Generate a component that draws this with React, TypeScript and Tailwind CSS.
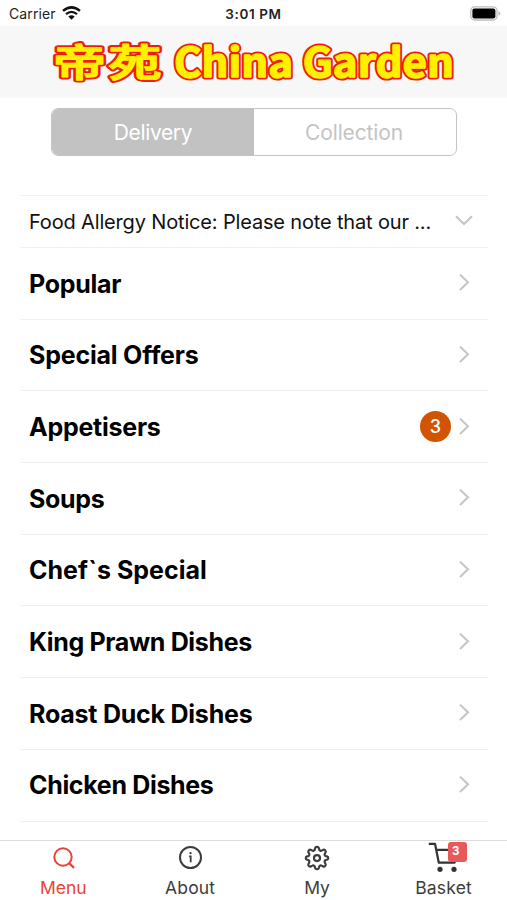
import type { ReactNode } from 'react';
import clsx from 'clsx';

type Category = {
  name: string;
  tracking: string;
  count?: number;
};

const CATEGORIES: Category[] = [
  { name: 'Popular', tracking: 'tracking-[-0.3px]' },
  { name: 'Special Offers', tracking: 'tracking-[-0.2px]' },
  { name: 'Appetisers', tracking: 'tracking-[-0.25px]', count: 3 },
  { name: 'Soups', tracking: 'tracking-[-0.3px]' },
  { name: 'Chef`s Special', tracking: 'tracking-[0px]' },
  { name: 'King Prawn Dishes', tracking: 'tracking-[-0.35px]' },
  { name: 'Roast Duck Dishes', tracking: 'tracking-[-0.23px]' },
  { name: 'Chicken Dishes', tracking: 'tracking-[-0.33px]' },
];

function StatusBar() {
  return (
    <header className="grid h-[26px] grid-cols-3 items-center pt-[2px] text-[14px] leading-none">
      <div className="flex items-center gap-[6px] pl-[9px] text-[#222]">
        <span className="tracking-[0.1px]">Carrier</span>
        <svg className="-mt-[2px]" width="19" height="14" viewBox="0 0 19 14" fill="none" aria-hidden>
          <path d="M1 4.9Q9.5 -2.1 18 4.9" stroke="#111" strokeWidth="2.5" />
          <path d="M4 8.1Q9.5 3.6 15 8.1" stroke="#111" strokeWidth="2.3" />
          <path d="M6.3 10.6Q9.5 7.8 12.7 10.6L9.5 13.8Z" fill="#111" />
        </svg>
      </div>
      <div className="pt-px text-center text-[13.5px] font-semibold tracking-[0.6px] text-[#222]">3:01 PM</div>
      <div className="flex justify-end pr-[6px]">
        <svg className="-mt-[2px]" width="31" height="15" viewBox="0 0 31 15" aria-hidden>
          <rect x="0.8" y="0.8" width="26.2" height="13.2" rx="3.8" fill="#fff" stroke="#bdbdbd" strokeWidth="1.3" />
          <rect x="2.4" y="2.4" width="23" height="10" rx="2" fill="#000" />
          <path d="M28.4 5.2Q30.4 5.7 30.4 7.4T28.4 9.6Z" fill="#bdbdbd" />
        </svg>
      </div>
    </header>
  );
}

function LogoText() {
  return (
    <>
      <text transform="translate(53 49.5) scale(1.4 1)" fontSize="38" fontWeight="500" letterSpacing="1.5">
        帝苑
      </text>
      <text x="174" y="51" fontSize="40" fontWeight="700" textLength="280" lengthAdjust="spacingAndGlyphs">
        China Garden
      </text>
    </>
  );
}

function Logo() {
  return (
    <div className="flex h-[72px] items-center justify-center bg-[#f7f7f7]">
      <svg
        width="507"
        height="72"
        viewBox="0 0 507 72"
        role="img"
        aria-label="帝苑 China Garden"
        fontFamily="'Noto Sans CJK SC', sans-serif"
        strokeLinejoin="round"
      >
        {/* red outline under a slightly fattened yellow face */}
        <g fill="#f01d0c" stroke="#f01d0c" strokeWidth="5.2">
          <LogoText />
        </g>
        <g fill="#fff000" stroke="#fff000" strokeWidth="1.4" aria-hidden>
          <LogoText />
        </g>
      </svg>
    </div>
  );
}

function Chevron({ down = false }: { down?: boolean }) {
  return (
    <svg
      className="shrink-0"
      width="18"
      height="18"
      viewBox="0 0 18 18"
      fill="none"
      stroke="#c4c4c4"
      strokeWidth="2"
      aria-hidden
    >
      <path d={down ? 'M1 3.2L9 11L17 3.2' : 'M5 0.6L13 8.3L5 16'} />
    </svg>
  );
}

function CategoryRow({ name, tracking, count }: Category) {
  return (
    <li className="flex h-[71.7px] items-center border-b border-[#f0f0f0] pr-[15px] pl-[9px]">
      <span className={clsx('flex-1 pt-[2px] text-[25px] font-bold whitespace-nowrap text-black', tracking)}>
        {name}
      </span>
      {count !== undefined && (
        <span className="mr-[4px] flex size-[31px] items-center justify-center rounded-full bg-[#d35400] text-[18px] font-medium text-white">
          {count}
        </span>
      )}
      <Chevron />
    </li>
  );
}

type TabProps = {
  label: string;
  tracking: string;
  active?: boolean;
  children: ReactNode;
};

function Tab({ label, tracking, active = false, children }: TabProps) {
  return (
    <button
      type="button"
      className={clsx('flex flex-col items-center', active ? 'text-[#ea4335]' : 'text-[#3c3c3c]')}
    >
      <span className="flex h-[34px] items-center">{children}</span>
      <span className={clsx('mt-px text-[17.5px] leading-[24px]', tracking)}>{label}</span>
    </button>
  );
}

export default function App() {
  return (
    <div className="flex h-[900px] w-[507px] flex-col overflow-hidden bg-white font-['Inter','Noto_Sans_CJK_SC',sans-serif]">
      <StatusBar />
      <Logo />

      <main className="flex min-h-0 flex-1 flex-col px-5">
        <div className="mt-[10px] ml-[31px] flex h-[48px] w-[406px] overflow-hidden rounded-[7px] border-[1.5px] border-[#c4c4c4] text-[21px]">
          <button type="button" className="w-[202px] bg-[#c2c2c2] pt-px tracking-[-0.35px] text-white">
            Delivery
          </button>
          <button type="button" className="flex-1 pt-px pr-[2px] tracking-[-0.15px] text-[#c4c4c4]">
            Collection
          </button>
        </div>

        <div className="mt-[39px] mr-[-1px] flex h-[53px] shrink-0 items-center border-y border-[#f0f0f0] pr-[15px] pl-[9px]">
          <p className="flex-1 text-[20px] tracking-[-0.16px] whitespace-nowrap text-[#111]">
            Food Allergy Notice: Please note that our ...
          </p>
          <Chevron down />
        </div>

        <ul className="mr-[-1px]">
          {CATEGORIES.map((category) => (
            <CategoryRow key={category.name} {...category} />
          ))}
        </ul>
      </main>

      <nav className="grid h-[60px] shrink-0 grid-cols-4 border-t border-[#dcdcdc] bg-white">
        <Tab label="Menu" tracking="tracking-normal" active>
          <svg className="ml-[2px]" width="22" height="22" viewBox="0 0 22 22" fill="none" stroke="currentColor" strokeWidth="2" aria-hidden>
            <circle cx="10" cy="10" r="8.7" />
            <path d="M16 16L21 20.8" strokeWidth="2.4" />
          </svg>
        </Tab>
        <Tab label="About" tracking="tracking-[0.2px]">
          <svg width="24" height="24" viewBox="0 0 24 24" fill="none" stroke="currentColor" strokeWidth="2" aria-hidden>
            <circle cx="12.5" cy="11.5" r="10.5" />
            <path d="M11.1 10.4H12.7V16.3" strokeWidth="1.8" />
            <circle cx="12.5" cy="7.1" r="1.2" fill="currentColor" stroke="none" />
          </svg>
        </Tab>
        <Tab label="My" tracking="tracking-[-0.3px]">
          <svg
            className="-mt-px"
            width="26"
            height="26"
            viewBox="0 0 24 24"
            fill="none"
            stroke="currentColor"
            strokeWidth="2"
            strokeLinejoin="round"
            aria-hidden
          >
            <path d="M10.2 3.1a1.85 1.85 0 0 1 3.6 0l.3 1.2a1.5 1.5 0 0 0 2.2.9l1.1-.6a1.75 1.75 0 0 1 2.4 2.4l-.6 1.1a1.5 1.5 0 0 0 .9 2.2l1.1.2a1.6 1.6 0 0 1 0 3.1l-1.1.3a1.5 1.5 0 0 0-.9 2.2l.6 1.1a1.75 1.75 0 0 1-2.4 2.4l-1.1-.6a1.5 1.5 0 0 0-2.2.9l-.3 1.1a1.85 1.85 0 0 1-3.6 0l-.3-1.1a1.5 1.5 0 0 0-2.2-.9l-1.1.6a1.75 1.75 0 0 1-2.4-2.4l.6-1.1a1.5 1.5 0 0 0-.9-2.2l-1.1-.3a1.6 1.6 0 0 1 0-3.1l1.1-.2a1.5 1.5 0 0 0 .9-2.2l-.6-1.1a1.75 1.75 0 0 1 2.4-2.4l1.1.6a1.5 1.5 0 0 0 2.2-.9Z" />
            <circle cx="12" cy="12.1" r="2.8" />
          </svg>
        </Tab>
        <Tab label="Basket" tracking="tracking-[0.2px]">
          <span className="relative -mt-[3px]">
            <svg width="32" height="32" viewBox="0 0 32 32" fill="none" stroke="#333" strokeWidth="2.2" aria-hidden>
              <path d="M0.8 2.8H7L10.8 21.7H26.5L30 8.8H8.3" strokeLinejoin="round" />
              <circle cx="12" cy="28.3" r="2.6" fill="#333" stroke="none" />
              <circle cx="26" cy="28.3" r="2.6" fill="#333" stroke="none" />
            </svg>
            <span className="absolute top-[1px] left-[20px] flex h-[20px] w-[19px] items-center justify-center rounded-[3px] bg-[#e85a5a] pr-[3px] text-[11.5px] font-bold text-white">
              3
            </span>
          </span>
        </Tab>
      </nav>
    </div>
  );
}
